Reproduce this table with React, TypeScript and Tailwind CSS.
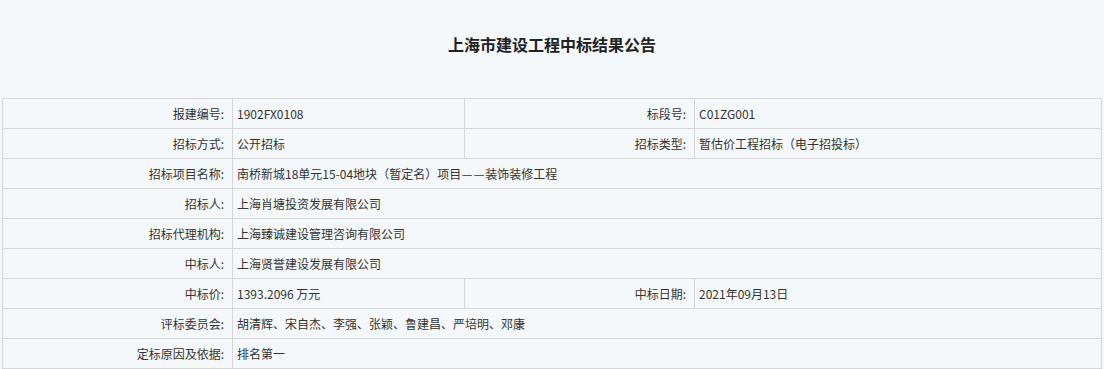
import type { ReactNode } from 'react'

const rows: { label: string; value: ReactNode; label2?: string; value2?: string }[] = [
  { label: '报建编号:', value: '1902FX0108', label2: '标段号:', value2: 'C01ZG001' },
  { label: '招标方式:', value: '公开招标', label2: '招标类型:', value2: '暂估价工程招标（电子招投标）' },
  {
    label: '招标项目名称:',
    value: (
      <>
        南桥新城18单元15-04地块（暂定名）项目
        <span className="inline-block w-[12px] text-center">—</span>
        <span className="inline-block w-[12px] text-center">—</span>
        装饰装修工程
      </>
    ),
  },
  { label: '招标人:', value: '上海肖塘投资发展有限公司' },
  { label: '招标代理机构:', value: '上海臻诚建设管理咨询有限公司' },
  { label: '中标人:', value: '上海贤誉建设发展有限公司' },
  { label: '中标价:', value: '1393.2096 万元', label2: '中标日期:', value2: '2021年09月13日' },
  { label: '评标委员会:', value: '胡清辉、宋自杰、李强、张颖、鲁建昌、严培明、邓康' },
  { label: '定标原因及依据:', value: '排名第一' },
]

const App = () => {
  return (
    <div
      className="min-h-[369px] w-[1104px] bg-[#f5f8fa] text-[#333] text-[12px]"
      style={{ fontFamily: '"Microsoft YaHei", "Noto Sans CJK SC", sans-serif' }}
    >
      <h1 className="pt-[34px] h-[98px] text-center text-[16px] leading-[20px] font-bold text-[#222]">
        上海市建设工程中标结果公告
      </h1>
      <div className="px-[2px]">
        <table className="w-[1100px] table-fixed border-collapse">
          <colgroup>
            <col className="w-[230px]" />
            <col className="w-[232px]" />
            <col className="w-[230px]" />
            <col />
          </colgroup>
          <tbody>
            {rows.map((row) => (
              <tr key={row.label} className="h-[30px]">
                <td className="border border-[#d6d6d6] pr-[8px] text-right">{row.label}</td>
                {row.label2 ? (
                  <>
                    <td className="border border-[#d6d6d6] pl-[4px]">{row.value}</td>
                    <td className="border border-[#d6d6d6] pr-[8px] text-right">{row.label2}</td>
                    <td className="border border-[#d6d6d6] pl-[4px]">{row.value2}</td>
                  </>
                ) : (
                  <td colSpan={3} className="border border-[#d6d6d6] pl-[4px]">{row.value}</td>
                )}
              </tr>
            ))}
          </tbody>
        </table>
      </div>
    </div>
  )
}

export default App
